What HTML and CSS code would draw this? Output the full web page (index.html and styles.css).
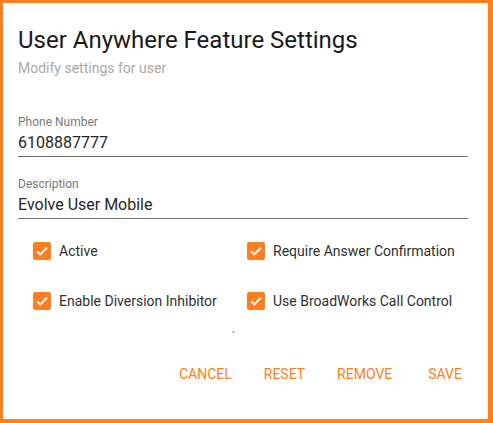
FILE: index.html
```html
<!DOCTYPE html>
<html>
<head>
<meta charset="utf-8">
<link rel="stylesheet" href="styles.css">
</head>
<body>
<div class="dialog">
  <h1 class="title">User Anywhere Feature Settings</h1>
  <p class="subtitle">Modify settings for user</p>
  <div class="field first">
    <label class="label">Phone Number</label>
    <div class="value">6108887777</div>
  </div>
  <div class="field">
    <label class="label">Description</label>
    <div class="value">Evolve User Mobile</div>
  </div>
  <div class="checks">
    <div class="check"><span class="box"><svg viewBox="0 0 18 18" width="18" height="18"><path d="M4 9.2l3.3 3.2L14 5.8" fill="none" stroke="#fff" stroke-width="2"/></svg></span>Active</div>
    <div class="check"><span class="box"><svg viewBox="0 0 18 18" width="18" height="18"><path d="M4 9.2l3.3 3.2L14 5.8" fill="none" stroke="#fff" stroke-width="2"/></svg></span>Require Answer Confirmation</div>
    <div class="check"><span class="box"><svg viewBox="0 0 18 18" width="18" height="18"><path d="M4 9.2l3.3 3.2L14 5.8" fill="none" stroke="#fff" stroke-width="2"/></svg></span>Enable Diversion Inhibitor</div>
    <div class="check"><span class="box"><svg viewBox="0 0 18 18" width="18" height="18"><path d="M4 9.2l3.3 3.2L14 5.8" fill="none" stroke="#fff" stroke-width="2"/></svg></span>Use BroadWorks Call Control</div>
  </div>
  <div class="tick">`</div>
  <div class="actions">
    <button class="btn">Cancel</button>
    <button class="btn">Reset</button>
    <button class="btn">Remove</button>
    <button class="btn save">Save</button>
  </div>
</div>
</body>
</html>
```
FILE: styles.css
```css
html, body {
  margin: 0;
  padding: 0;
  background: #fd7f22;
  width: 493px;
  height: 423px;
  overflow: hidden;
}
body {
  padding: 3px 5px 4px 3px;
  box-sizing: border-box;
  font-family: Roboto, "Liberation Sans", sans-serif;
}
.dialog {
  background: #fff;
  height: 416px;
  box-sizing: border-box;
  padding: 23px 20px 0 15px;
}
.title {
  margin: 0;
  font-size: 24px;
  font-weight: 400;
  line-height: 28px;
  color: #1a1a1a;
}
.subtitle {
  margin: 6px 0 0;
  font-size: 14px;
  line-height: 16px;
  color: #a9a9a9;
}
.field {
  border-bottom: 1px solid #707070;
  padding-bottom: 3px;
}
.field.first { margin-top: 39px; }
.field + .field { margin-top: 20px; }
.label {
  display: block;
  font-size: 12px;
  line-height: 14px;
  color: #7a7a7a;
}
.value {
  font-size: 16px;
  line-height: 20px;
  color: #262626;
  margin-top: 4px;
}
.checks {
  display: grid;
  grid-template-columns: 214px 1fr;
  row-gap: 32px;
  padding: 23px 0 0 15px;
}
.check {
  display: flex;
  align-items: center;
  font-size: 14px;
  line-height: 18px;
  color: #303030;
}
.box {
  width: 18px;
  height: 18px;
  border-radius: 2px;
  background: #fd7f22;
  margin-right: 8px;
  display: inline-flex;
}
.tick {
  font-size: 10px;
  line-height: 10px;
  height: 10px;
  color: #333;
  padding-left: 214px;
  margin-top: 22px;
}
.actions {
  display: flex;
  justify-content: flex-end;
  margin-top: 16px;
  margin-right: -10px;
}
.btn {
  background: none;
  border: 0;
  font-family: Roboto, "Liberation Sans", sans-serif;
  font-size: 14px;
  text-transform: uppercase;
  color: #fd7f22;
  padding: 8px 16px;
  line-height: 16px;
  cursor: pointer;
}
.btn.save { margin-left: 4px; }
```
